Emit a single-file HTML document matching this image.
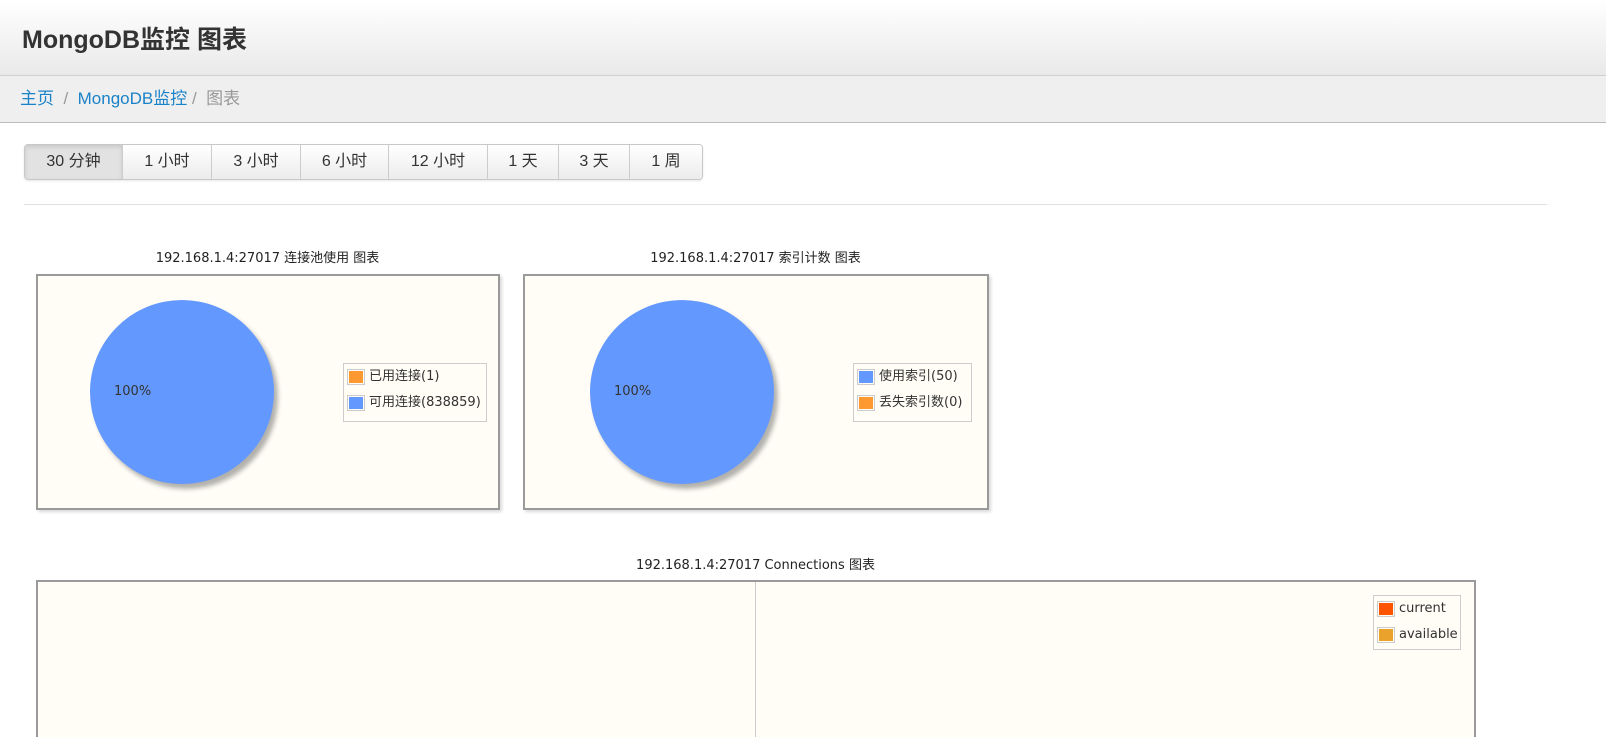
<!DOCTYPE html>
<html style="overflow:hidden;height:737px"><head><meta charset="utf-8"><style>
body{margin:0;width:1606px;height:737px;overflow:hidden;background:#fff;font-family:"Liberation Sans","Noto Sans CJK SC",sans-serif;position:relative}
.hd{position:absolute;left:0;top:0;width:1606px;height:75px;background:linear-gradient(#fff,#e9e9e9);border-bottom:1px solid #d0d0d0}
.hd h1{margin:0;position:absolute;left:22px;top:20px;font-size:25px;font-weight:bold;color:#333}
.bc{position:absolute;left:0;top:76px;width:1606px;height:46px;background:#efefef;border-bottom:1px solid #bbb;font-size:17px;line-height:46px;color:#999}
.bc a{color:#1a82c8;text-decoration:none}
.bg{position:absolute;left:24px;top:144px;height:34px;border:1px solid #c8c8c8;border-radius:4px;display:flex;box-shadow:0 1px 2px rgba(0,0,0,.1);overflow:hidden}
.bg div{height:34px;line-height:34px;text-align:center;font-size:16px;color:#333;border-right:1px solid #ccc;background:linear-gradient(#fff,#ececec)}
.bg div:last-child{border-right:none}
.bg .act{background:#e2e2e2;box-shadow:inset 0 2px 4px rgba(0,0,0,.12)}
.hr{position:absolute;left:24px;top:204px;width:1523px;border-top:1px solid #e0e0e0}
.t{position:absolute;font-size:13px;color:#222;text-align:center;font-family:"DejaVu Sans","Noto Sans CJK SC",sans-serif}
.box{position:absolute;border:2px solid #9a9a9a;background:#fffdf6;box-sizing:border-box;box-shadow:2px 2px 3px rgba(0,0,0,.15)}
.pie{position:absolute;width:184px;height:184px;border-radius:50%;background:#6398fe;box-shadow:4px 5px 5px rgba(0,0,0,.3)}
.pl{position:absolute;font-size:13px;color:#333;font-family:"DejaVu Sans",sans-serif}
.lg{position:absolute;border:1px solid #ccc;background:#fffdf6;font-size:13px;color:#333;font-family:"DejaVu Sans","Noto Sans CJK SC",sans-serif}
.lg div{height:26px;line-height:26px;padding-left:3px;display:flex;align-items:center;white-space:nowrap}
.lg span{display:inline-block;width:14px;height:12px;border:1px solid #ccc;padding:1px;background-clip:content-box;margin-right:4px;flex:none}
</style></head><body>
<div class="hd"><h1>MongoDB监控 图表</h1></div>
<div class="bc"><span style="margin-left:20px"><a>主页</a>&nbsp;&nbsp;/&nbsp;&nbsp;<a>MongoDB监控</a>&nbsp;/&nbsp;&nbsp;图表</span></div>
<div class="bg">
<div class="act" style="width:97px">30 分钟</div><div style="width:88px">1 小时</div><div style="width:88px">3 小时</div><div style="width:87px">6 小时</div><div style="width:98px">12 小时</div><div style="width:70px">1 天</div><div style="width:70px">3 天</div><div style="width:72px">1 周</div>
</div>
<div class="hr"></div>

<div class="t" style="left:36px;width:463px;top:247px">192.168.1.4:27017 连接池使用 图表</div>
<div class="box" style="left:36px;top:274px;width:464px;height:236px">
<div class="pie" style="left:52px;top:24px"></div>
<div class="pl" style="left:76px;top:108px">100%</div>
<div class="lg" style="left:305px;top:87px;width:142px;height:57px">
<div><span style="background-color:#fe9830"></span>已用连接(1)</div>
<div><span style="background-color:#6398fe"></span>可用连接(838859)</div></div>
</div>

<div class="t" style="left:523px;width:465px;top:247px">192.168.1.4:27017 索引计数 图表</div>
<div class="box" style="left:523px;top:274px;width:466px;height:236px">
<div class="pie" style="left:65px;top:24px"></div>
<div class="pl" style="left:89px;top:108px">100%</div>
<div class="lg" style="left:328px;top:87px;width:117px;height:57px">
<div><span style="background-color:#6398fe"></span>使用索引(50)</div>
<div><span style="background-color:#fe9830"></span>丢失索引数(0)</div></div>
</div>

<div class="t" style="left:36px;width:1439px;top:554px">192.168.1.4:27017 Connections 图表</div>
<div class="box" style="left:36px;top:580px;width:1440px;height:157px;border-bottom:none;box-shadow:none">
<div style="position:absolute;left:717px;top:0;bottom:0;border-left:1px solid #ccc"></div>
<div class="lg" style="left:1335px;top:13px;width:86px;height:53px">
<div><span style="background-color:#fe5400"></span>current</div>
<div><span style="background-color:#eba22d"></span>available</div></div>
</div>
</body></html>
